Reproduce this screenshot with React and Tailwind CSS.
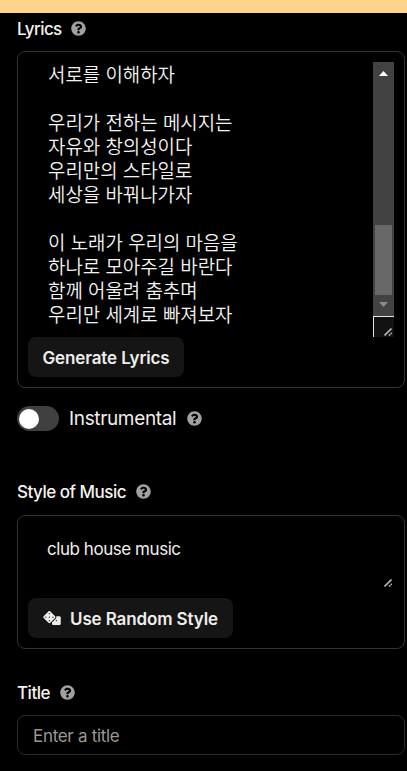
import React, { useState } from 'react';
import { FaDice, FaQuestionCircle } from 'react-icons/fa';

const LYRICS = [
    '서로를 이해하자',
    '',
    '우리가 전하는 메시지는',
    '자유와 창의성이다',
    '우리만의 스타일로',
    '세상을 바꿔나가자',
    '',
    '이 노래가 우리의 마음을',
    '하나로 모아주길 바란다',
    '함께 어울려 춤추며',
    '우리만 세계로 빠져보자',
];

function HelpIcon() {
    return <FaQuestionCircle className="mb-px size-[15px] shrink-0 text-[#a3a19f]" />;
}

function FieldLabel({ children, className }) {
    return (
        <div className={`flex h-6 items-center ${className}`}>
            <span className="text-[17px] leading-6 font-medium whitespace-nowrap text-[#f5f3f0]">{children}</span>
            <HelpIcon />
        </div>
    );
}

function ResizeGrip() {
    return (
        <svg className="block size-2" viewBox="0 0 8 8" fill="none" stroke="#b0b0b0" strokeWidth="1.7">
            <path d="M0.5 7.5L7.5 0.5" />
            <path d="M5 7.5L7.8 4.9" strokeDasharray="1.7 0.7" />
        </svg>
    );
}

function Scrollbar() {
    return (
        <div className="flex h-[275px] w-[21px] shrink-0 flex-col">
            <div className="flex h-[254px] flex-col items-center bg-[#424242]">
                <svg className="mt-[9px] block h-[5px] w-[9px]" viewBox="0 0 9 5" fill="#fff">
                    <path d="M4.5 0L9 5H0Z" />
                </svg>
                <div className="mt-[149px] h-[70px] w-[17px] bg-[#686868]" />
                <svg className="mt-[7px] block h-[5px] w-[9px]" viewBox="0 0 9 5" fill="#8b8b8b">
                    <path d="M0 0H9L4.5 5Z" />
                </svg>
            </div>
            <div className="flex h-[21px] items-end justify-end border-t border-l border-[#e5e5e5] bg-[#121212] pr-[2px] pb-px">
                <ResizeGrip />
            </div>
        </div>
    );
}

export default function App() {
    const [instrumental, setInstrumental] = useState(false);
    const [title, setTitle] = useState('');

    return (
        <div className="h-[771px] w-[407px] overflow-hidden bg-black font-['Inter','Noto_Sans_CJK_KR',sans-serif] text-[#f0eeeb]">
            <div className="h-[13px] bg-[#fdd38d]" />

            <div className="pl-[17px] pr-[2px]">
                <FieldLabel className="mt-1 gap-[9px] tracking-[-0.6px]">Lyrics</FieldLabel>

                {/* Lyrics */}
                <div className="mt-[10px] h-[337px] rounded-lg border border-[#333] p-[10px]">
                    <div className="flex h-[275px] justify-between">
                        <div className="pt-[2px] pl-5 text-[18.9px] leading-6 font-[350] whitespace-nowrap text-[#f5f3f0]">
                            {LYRICS.map((line, i) => (
                                <p key={i} className="h-6">{line}</p>
                            ))}
                        </div>
                        <Scrollbar />
                    </div>
                    <button className="flex h-10 w-[156px] items-center justify-center rounded-lg bg-[#151515] pt-[3px] text-[17px] font-semibold tracking-[-0.12px] whitespace-nowrap">
                        Generate Lyrics
                    </button>
                </div>

                {/* Instrumental */}
                <div className="mt-[18px] flex h-[25px] items-center">
                    <button
                        onClick={() => setInstrumental(!instrumental)}
                        className={`flex h-[25px] w-[42px] items-center rounded-full bg-[#404040] px-[2px] ${instrumental ? 'justify-end' : 'justify-start'}`}
                    >
                        <span className="size-5 rounded-full bg-white" />
                    </button>
                    <span className="mt-px mr-[11px] ml-[10px] text-[19px] tracking-[-0.35px]">Instrumental</span>
                    <HelpIcon />
                </div>

                <FieldLabel className="mt-[49px] gap-[10px] tracking-[-0.5px]">Style of Music</FieldLabel>

                {/* Style of music */}
                <div className="mt-[11px] h-[134px] rounded-lg border border-[#333] p-[10px]">
                    <div className="flex h-[72px] justify-between">
                        <p className="pt-[11px] pl-[19px] text-[17px] leading-6 tracking-[-0.45px]">club house music</p>
                        <div className="flex items-end pr-[2px] pb-[11px]">
                            <ResizeGrip />
                        </div>
                    </div>
                    <button className="flex h-10 w-[205px] items-center justify-center gap-[9px] rounded-lg bg-[#151515] pt-[3px] text-[17px] font-semibold tracking-[-0.12px] whitespace-nowrap">
                        <FaDice className="mb-[3px] h-[14px] w-[18px]" />
                        Use Random Style
                    </button>
                </div>

                <FieldLabel className="mt-8 gap-[10px] tracking-[-0.5px]">Title</FieldLabel>

                <input
                    value={title}
                    onChange={(e) => setTitle(e.target.value)}
                    placeholder="Enter a title"
                    className="mt-[10px] block h-10 w-full rounded-lg border border-[#2a2a2a] bg-black px-[15px] pt-[2px] text-[17px] tracking-[-0.3px] outline-none placeholder:text-[#9b9895]"
                />
            </div>
        </div>
    );
}
